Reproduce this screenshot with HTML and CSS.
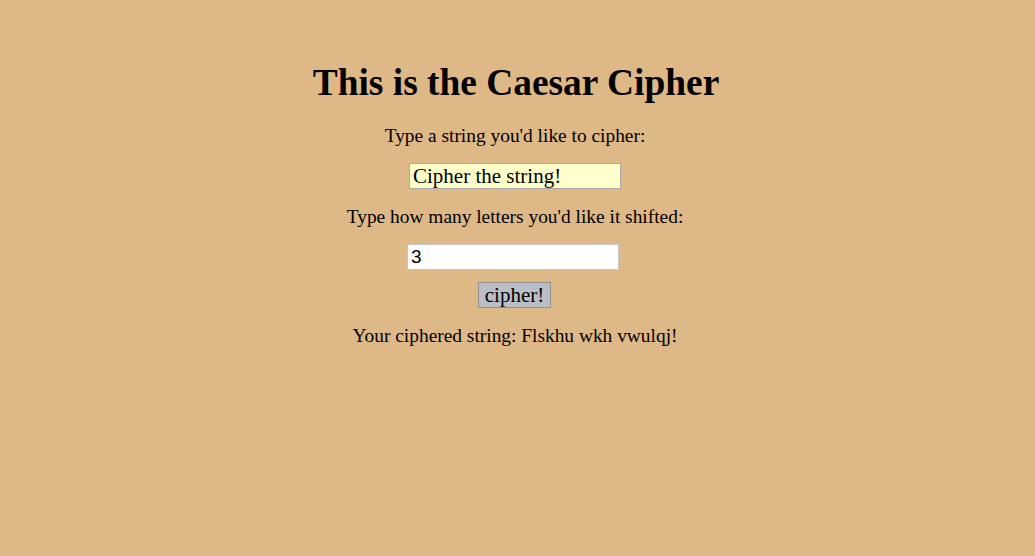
FILE: index.html
```html
<!DOCTYPE html>
<html>
<head>
<meta charset="utf-8">
<link rel="stylesheet" href="styles.css">
</head>
<body>
<main class="page">
  <h1 class="title">This is the Caesar Cipher</h1>
  <p class="label">Type a string you'd like to cipher:</p>
  <input class="field field-text" type="text" value="Cipher the string!">
  <p class="label label-shift">Type how many letters you'd like it shifted:</p>
  <input class="field field-num" type="text" value="3">
  <button class="btn" type="button">cipher!</button>
  <p class="label result">Your ciphered string: Flskhu wkh vwulqj!</p>
</main>
</body>
</html>
```
FILE: styles.css
```css
html, body {
  margin: 0;
  padding: 0;
  background: #deb887;
}
body {
  font-family: "Liberation Serif", serif;
  color: #000;
}
.page {
  display: flex;
  flex-direction: column;
  align-items: center;
  padding-top: 61px;
}
.title {
  margin: 0 3px 0 0;
  font-size: 37.4px;
  font-weight: bold;
  line-height: 44px;
}
.label {
  margin: 20px 5px 0 0;
  font-size: 19.4px;
  line-height: 22px;
}
.field {
  box-sizing: border-box;
  width: 212px;
  height: 26px;
  margin-top: 16px;
  border: 1px solid #a9a9a9;
  padding: 0 3px;
  font-family: "Liberation Serif", serif;
  font-size: 21px;
}
.field-text {
  background: #ffffcc;
  margin-right: 5px;
}
.field-num {
  background: #fff;
  font-family: "Liberation Sans", sans-serif;
  font-size: 19px;
  border-color: #c8c8c8;
  margin-right: 9px;
}
.label-shift {
  margin-top: 17px;
}
.btn {
  box-sizing: border-box;
  margin-top: 12px;
  margin-right: 6px;
  width: 73px;
  height: 26px;
  padding: 0;
  background: #b9bec7;
  border: 1px solid #8f8f8f;
  font-family: "Liberation Serif", serif;
  font-size: 21px;
  color: #000;
}
.result {
  margin-top: 17px;
}
```
